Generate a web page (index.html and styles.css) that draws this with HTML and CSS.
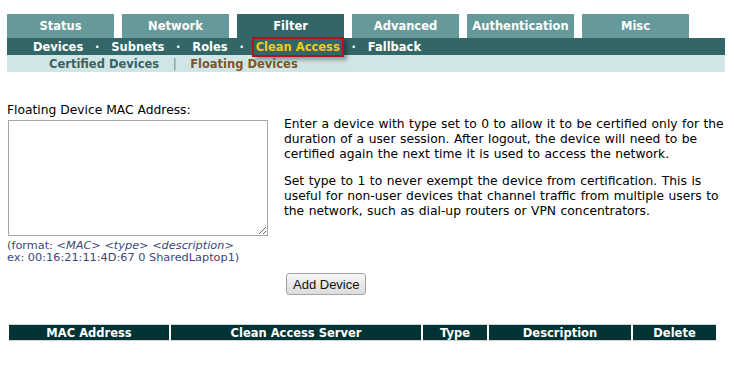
FILE: index.html
```html
<!DOCTYPE html>
<html lang="en">
<head>
    <meta charset="UTF-8">
    <title>Filter - Clean Access - Floating Devices</title>
    <link rel="stylesheet" href="styles.css">
</head>
<body>
    <div class="tabs">
        <a class="tab">Status</a>
        <a class="tab">Network</a>
        <a class="tab tab-active">Filter</a>
        <a class="tab">Advanced</a>
        <a class="tab">Authentication</a>
        <a class="tab">Misc</a>
    </div>

    <div class="subnav">
        <a>Devices</a><span class="sep">&middot;</span>
        <a>Subnets</a><span class="sep">&middot;</span>
        <a>Roles</a><span class="sep">&middot;</span>
        <a class="current"><span class="marked">Clean Access</span></a><span class="sep">&middot;</span>
        <a>Fallback</a>
    </div>

    <div class="subsubnav">
        <a>Certified Devices</a><span class="sep">|</span><a class="current">Floating Devices</a>
    </div>

    <div class="content">
        <form class="entry">
            <div class="entry-left">
                <label for="macList">Floating Device MAC Address:</label>
                <textarea id="macList"></textarea>
                <div class="format">
                    (format: <i>&lt;MAC&gt;</i> <i>&lt;type&gt;</i> <i>&lt;description&gt;</i><br>
                    ex: 00:16:21:11:4D:67 0 SharedLaptop1)
                </div>
            </div>

            <div class="entry-help">
                <p>Enter a device with type set to 0 to allow it to be certified only for the duration of a user session. After logout, the device will need to be certified again the next time it is used to access the network.</p>
                <p>Set type to 1 to never exempt the device from certification. This is useful for non-user devices that channel traffic from multiple users to the network, such as dial-up routers or VPN concentrators.</p>
            </div>

            <div class="entry-action">
                <button type="button" class="btn">Add Device</button>
            </div>
        </form>

        <table class="devices">
            <thead>
                <tr>
                    <th class="col-mac">MAC Address</th>
                    <th class="col-server">Clean Access Server</th>
                    <th class="col-type">Type</th>
                    <th class="col-desc">Description</th>
                    <th class="col-delete">Delete</th>
                </tr>
            </thead>
        </table>
    </div>
</body>
</html>
```

FILE: styles.css
```css
* {
    margin: 0;
    padding: 0;
    box-sizing: border-box;
}

body {
    font-family: 'DejaVu Sans', Verdana, sans-serif;
    font-size: 12.3px;
    color: #000;
    background: white;
    padding: 14px 0 0 7px;
}

/* top tabs */
.tabs {
    display: flex;
    gap: 8px;
}

.tab {
    width: 107px;
    height: 24px;
    line-height: 25px;
    text-align: center;
    background: #669999;
    color: white;
    font-weight: bold;
    font-size: 11.5px;
}

.tab-active {
    background: #336666;
}

/* second level */
.subnav {
    display: flex;
    align-items: center;
    width: 718px;
    height: 17px;
    padding-left: 26px;
    background: #336666;
    color: white;
    font-weight: bold;
    font-size: 11.5px;
}

.subnav .sep {
    width: 28px;
    text-align: center;
}

.subnav .current {
    color: #f0cc14;
}

.marked {
    border: 2px solid #b5121b;
    padding: 1px 2px;
    margin: 0 -4px;
    box-shadow: 3px 3px 4px rgba(0,0,0,0.35);
}

/* third level */
.subsubnav {
    display: flex;
    align-items: center;
    width: 718px;
    height: 17px;
    padding-left: 42px;
    background: #d0e6e6;
    color: #3d6161;
    font-weight: bold;
    font-size: 11.5px;
}

.subsubnav .sep {
    width: 31px;
    text-align: center;
    font-weight: normal;
    color: #6a8a8a;
}

.subsubnav .current {
    color: #7f5426;
}

/* entry form */
.content {
    padding-top: 31px;
}

.entry {
    display: grid;
    grid-template-columns: 277px 444px;
}

.entry-left label {
    display: block;
    line-height: 15px;
}

.entry-left textarea {
    display: block;
    width: 260px;
    height: 116px;
    margin: 2px 0 0 1px;
    border: 1px solid #a5a5a5;
    resize: both;
}

.format {
    margin-top: 4px;
    font-size: 11.3px;
    line-height: 12px;
    color: #3a4878;
}

.entry-help {
    padding-top: 14px;
    line-height: 15px;
    word-spacing: 0.6px;
}

.entry-help p {
    margin-bottom: 12px;
}

.entry-action {
    grid-column: 2;
    padding-top: 9px;
}

.btn {
    height: 22px;
    padding: 0 6px;
    margin-left: 2px;
    font-family: 'Liberation Sans', Arial, sans-serif;
    font-size: 13px;
    color: #111;
    background: linear-gradient(#f7f7f7, #dcdcdc);
    border: 1px solid #a3a3a3;
    border-radius: 3px;
}

/* device list */
.devices {
    margin-top: 29px;
    border-spacing: 2px 0;
}

.devices th {
    height: 17px;
    background: #003333;
    color: white;
    font-size: 11.5px;
    font-weight: bold;
    border-top: 1px solid #cfd6d6;
    border-bottom: 1px solid #cfd6d6;
    padding: 1px 0 0;
}

.col-mac { width: 160px; }
.col-server { width: 250px; }
.col-type { width: 64px; }
.col-desc { width: 142px; }
.col-delete { width: 83px; }
```
